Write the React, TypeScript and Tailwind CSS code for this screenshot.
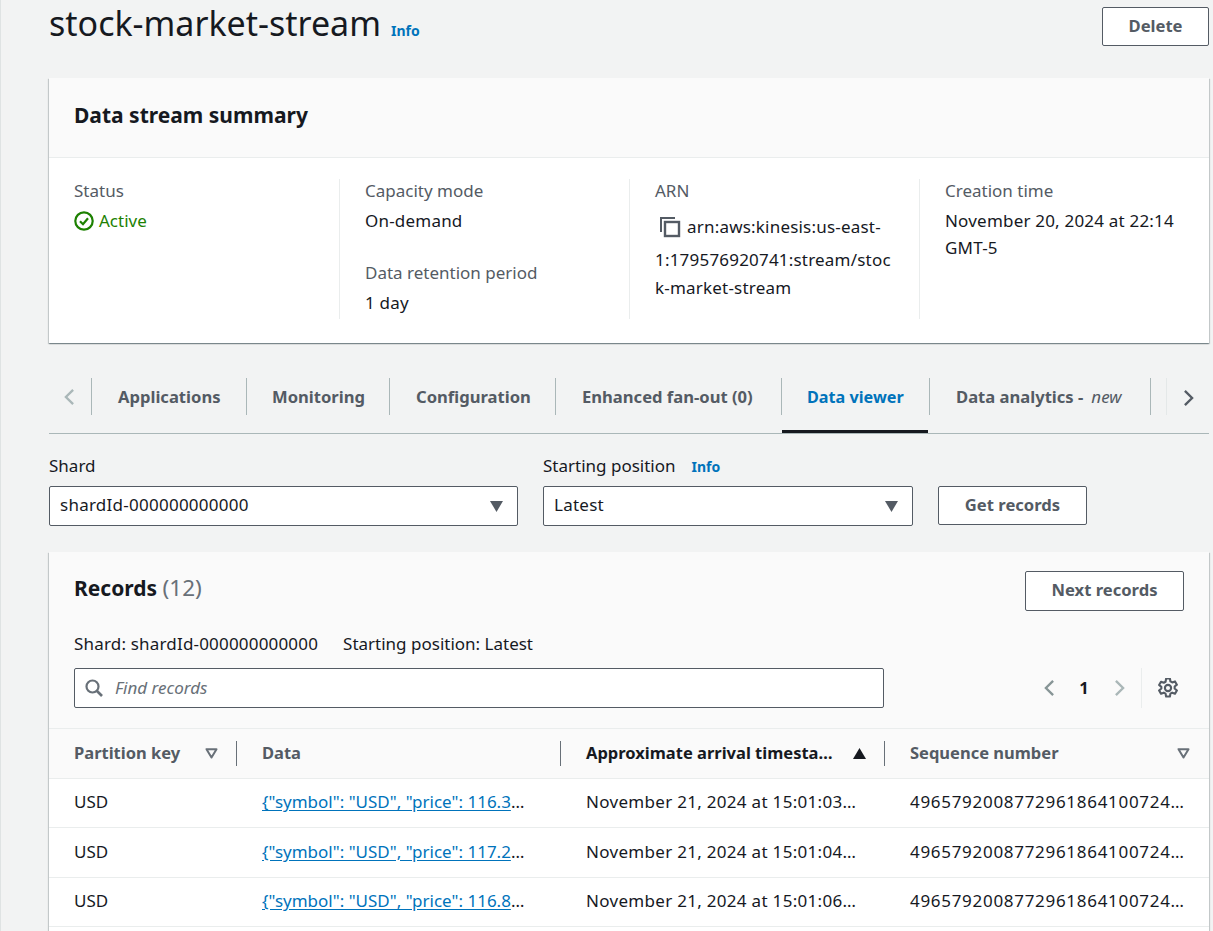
import React from 'react';

const records = [
  { data: '{"symbol": "USD", "price": 116.3', time: 'November 21, 2024 at 15:01:03' },
  { data: '{"symbol": "USD", "price": 117.2', time: 'November 21, 2024 at 15:01:04' },
  { data: '{"symbol": "USD", "price": 116.8', time: 'November 21, 2024 at 15:01:06' },
];

const Caret = ({ className, fill = '#545b64' }: { className: string; fill?: string }) => (
  <svg viewBox="0 0 12 10" className={className}>
    <path d="M0 0h12L6 10z" fill={fill} />
  </svg>
);

const SortOutline = () => (
  <svg viewBox="0 0 13 11" className="w-[13px] h-[11px]">
    <path d="M1.5 1.2h10L6.5 9.5z" fill="none" stroke="#687078" strokeWidth="2" strokeLinejoin="round" />
  </svg>
);

const Chevron = ({ dir, color, className }: { dir: 'l' | 'r'; color: string; className: string }) => (
  <svg viewBox="0 0 12 20" className={className}>
    <path d={dir === 'l' ? 'M10 2L2 10l8 8' : 'M2 2l8 8-8 8'} fill="none" stroke={color} strokeWidth="2.6" />
  </svg>
);

const TabDivider = () => <div className="w-px h-[37px] bg-[#aab7b8] shrink-0" />;

const Tab = ({ label, active, suffix, tight, className }: { label: string; active?: boolean; suffix?: string; tight?: boolean; className: string }) => (
  <div className={`relative h-[55px] flex items-start ${className}`}>
    <TabDivider />
    <div className={`${tight ? 'pl-[25px]' : 'pl-[26px]'} flex items-center h-[38px] whitespace-nowrap`}>
      <span className={`font-bold ${active ? 'text-[16.2px] text-[#0073bb]' : 'text-[16.6px] text-[#545b64]'}`}>{label}</span>
      {suffix && <span className="italic text-[#545b64] text-[17px] ml-[8px]">{suffix}</span>}
    </div>
    {active && <div className="absolute left-px right-px bottom-0 h-[3px] bg-[#16191f]" />}
  </div>
);

const Label = ({ children }: { children: React.ReactNode }) => (
  <div className="text-[#545b64] text-[17px] leading-[24px]">{children}</div>
);

const Value = ({ children }: { children: React.ReactNode }) => (
  <div className="text-[#16191f] text-[17px] leading-[27px] tracking-[0.2px]">{children}</div>
);

const Button = ({ children, className }: { children: React.ReactNode; className: string }) => (
  <button className={`border border-[#545b64] rounded-[2px] bg-white font-bold text-[16.6px] text-[#545b64] flex items-center justify-center ${className}`}>
    {children}
  </button>
);

const SelectBox = ({ value, className }: { value: string; className: string }) => (
  <div className={`h-10 border border-[#545b64] rounded-[2px] bg-white flex items-center justify-between pl-[10px] pr-[14px] ${className}`}>
    <span className="text-[17px] text-[#16191f] tracking-[0.25px] mt-[-2px]">{value}</span>
    <Caret className="w-[13px] h-[11px] mt-[1px]" />
  </div>
);

const cardShadow = 'shadow-[0_1px_1px_0_rgba(0,28,36,0.3),1px_1px_1px_0_rgba(0,28,36,0.15),-1px_1px_1px_0_rgba(0,28,36,0.15)]';

export default function App() {
  return (
    <div className="h-[931px] overflow-hidden bg-[#f2f3f3] border-l border-[#dfe3e3] pl-[48px] pr-[4px] pt-[7px] font-['Noto_Sans',sans-serif]">
      {/* Title */}
      <div className="flex justify-between items-start h-[71px]">
        <div className="flex items-baseline mt-[-6px]">
          <h1 className="text-[34px] leading-[44px] text-[#16191f]">stock-market-stream</h1>
          <a className="ml-[10px] text-[14px] font-bold text-[#0073bb]">Info</a>
        </div>
        <Button className="w-[107px] h-[39px] pb-[1px]">Delete</Button>
      </div>

      {/* Summary */}
      <section className={`bg-white h-[265px] ${cardShadow}`}>
        <div className="h-[80px] bg-[#fafafa] border-b border-[#eaeded] pl-[25px] pb-[3px] flex items-center">
          <h2 className="font-bold text-[21px] text-[#16191f]">Data stream summary</h2>
        </div>
        <div className="grid grid-cols-[290px_290px_290px_1fr] pl-[25px] pt-[21px]">
          <div className="h-[140px] w-[265px]">
            <Label>Status</Label>
            <div className="flex items-center gap-[5px] mt-[6px]">
              <svg viewBox="0 0 20 20" className="w-5 h-5">
                <circle cx="10" cy="10" r="8.7" fill="none" stroke="#1d8102" strokeWidth="2.2" />
                <path d="M6 10.2l3 3 5-6" fill="none" stroke="#1d8102" strokeWidth="2.2" />
              </svg>
              <span className="text-[17px] leading-[24px] text-[#1d8102]">Active</span>
            </div>
          </div>
          <div className="h-[140px] border-l border-[#eaeded] pl-[25px] ml-[-25px]">
            <Label>Capacity mode</Label>
            <div className="mt-[4px]"><Value>On-demand</Value></div>
            <div className="mt-[27px]"><Label>Data retention period</Label></div>
            <div className="mt-[4px]"><Value>1 day</Value></div>
          </div>
          <div className="h-[140px] border-l border-[#eaeded] pl-[25px] ml-[-25px]">
            <Label>ARN</Label>
            <div className="mt-[8px] text-[17px] leading-[31px] text-[#16191f] tracking-[0.2px] whitespace-nowrap">
              <div className="flex items-center h-[31px]">
                <svg viewBox="0 0 22 22" className="w-[22px] h-[22px] ml-[4px] mr-[6px] shrink-0">
                  <path d="M2 16V2h14" fill="none" stroke="#545b64" strokeWidth="2" />
                  <rect x="6" y="6" width="14" height="14" fill="none" stroke="#545b64" strokeWidth="2.4" />
                </svg>
                arn:aws:kinesis:us-east-
              </div>
              <div className="mt-[2px]">1:179576920741:stream/stoc</div>
              <div className="mt-[-3px]">k-market-stream</div>
            </div>
          </div>
          <div className="h-[140px] border-l border-[#eaeded] pl-[25px] ml-[-25px]">
            <Label>Creation time</Label>
            <div className="mt-[4px]">
              <Value>November 20, 2024 at 22:14</Value>
              <Value>GMT-5</Value>
            </div>
          </div>
        </div>
      </section>

      {/* Tabs */}
      <div className="mt-[35px] h-[56px] border-b border-[#aab7b8] flex items-start">
        <div className="w-[42px] h-[37px] flex items-center justify-end pr-[16px]">
          <Chevron dir="l" color="#aab7b8" className="w-[11px] h-[18px]" />
        </div>
        <Tab label="Applications" className="w-[155px]" />
        <Tab label="Monitoring" tight className="w-[143px]" />
        <Tab label="Configuration" className="w-[166px]" />
        <Tab label="Enhanced fan-out (0)" className="w-[226px]" />
        <Tab label="Data viewer" active tight className="w-[148px]" />
        <Tab label="Data analytics -" suffix="new" className="w-[221px]" />
        <TabDivider />
        <div className="w-px h-[37px] bg-[#e4e8e8] ml-[15px]" />
        <div className="h-[37px] flex items-center ml-[16px] pt-[2px]">
          <Chevron dir="r" color="#545b64" className="w-[11px] h-[18px]" />
        </div>
      </div>

      {/* Shard controls */}
      <div className="flex mt-[20px] items-start">
        <div className="w-[469px]">
          <div className="text-[17px] leading-[24px] mb-[8px] text-[#16191f]">Shard</div>
          <SelectBox value="shardId-000000000000" className="w-full" />
        </div>
        <div className="w-[370px] ml-[25px]">
          <div className="flex items-baseline h-[24px] text-[17px] leading-[24px] mb-[8px] text-[#16191f]">
            Starting position
            <a className="ml-[16px] text-[14px] font-bold text-[#0073bb]">Info</a>
          </div>
          <SelectBox value="Latest" className="w-full" />
        </div>
        <Button className="w-[149px] h-[39px] ml-[25px] mt-[32px] pb-[1px]">Get records</Button>
      </div>

      {/* Records */}
      <section className={`mt-[26px] bg-white h-[500px] ${cardShadow}`}>
        <div className="bg-[#fafafa] border-b border-[#eaeded]">
          <div className="h-[177px] border-b border-[#eaeded] pl-[25px] pr-[25px] pt-[19px]">
            <div className="flex justify-between items-start">
              <h2 className="text-[21px] leading-[38px] text-[#16191f] mt-[-2px]">
                <span className="font-bold">Records</span> <span className="text-[#687078] text-[22.5px]">(12)</span>
              </h2>
              <Button className="w-[159px] h-10 pb-[1px]">Next records</Button>
            </div>
            <div className="flex gap-[25px] mt-[21px] text-[17px] leading-[24px] text-[#16191f]">
              <span className="tracking-[0.18px]">Shard: shardId-000000000000</span>
              <span>Starting position: Latest</span>
            </div>
            <div className="flex items-center mt-[12px]">
              <div className="w-[810px] h-10 border border-[#545b64] rounded-[2px] bg-white flex items-center pl-[10px]">
                <svg viewBox="0 0 18 18" className="w-[18px] h-[18px]">
                  <circle cx="7.5" cy="7.5" r="6" fill="none" stroke="#687078" strokeWidth="2.2" />
                  <path d="M12 12l5 5" stroke="#687078" strokeWidth="2.6" />
                </svg>
                <span className="ml-[12px] italic text-[17px] text-[#687078]">Find records</span>
              </div>
              <div className="ml-auto flex items-center h-10">
                <Chevron dir="l" color="#879596" className="w-[11px] h-[18px]" />
                <span className="ml-[24px] w-[10px] text-center font-bold text-[16.5px] text-[#16191f]">1</span>
                <Chevron dir="r" color="#aab7b8" className="w-[11px] h-[18px] ml-[25px]" />
                <div className="w-px h-10 bg-[#eaeded] ml-[16px]" />
                <svg viewBox="1 1 18 18" className="w-5 h-5 ml-[16px] mr-[6px]">
                  <path d="M8.3 1.5h3.4l.5 2.6 1.6.9 2.5-.9 1.7 2.9-2 1.7v1.8l2 1.7-1.7 2.9-2.5-.9-1.6.9-.5 2.6H8.3l-.5-2.6-1.6-.9-2.5.9-1.7-2.9 2-1.7V9l-2-1.7 1.7-2.9 2.5.9 1.6-.9z" fill="none" stroke="#545b64" strokeWidth="1.9" strokeLinejoin="round" />
                  <circle cx="10" cy="10" r="2.8" fill="none" stroke="#545b64" strokeWidth="1.9" />
                </svg>
              </div>
            </div>
          </div>
          <div className="grid grid-cols-[163px_324px_324px_1fr] h-[49px] items-center text-[16.5px] font-bold pl-[25px]">
            <div className="flex items-center justify-between pr-[19px] text-[#545b64] relative">
              Partition key
              <SortOutline />
              <div className="absolute right-0 top-0 w-px h-[25px] bg-[#687078]" />
            </div>
            <div className="pl-[25px] text-[#545b64] relative">
              Data
              <div className="absolute right-0 top-0 w-px h-[25px] bg-[#687078]" />
            </div>
            <div className="pl-[25px] flex items-center justify-between pr-[19px] text-[#16191f] relative">
              <span className="whitespace-nowrap">Approximate arrival timesta…</span>
              <Caret className="w-[13px] h-[11px] rotate-180" fill="#16191f" />
              <div className="absolute right-0 top-0 w-px h-[25px] bg-[#687078]" />
            </div>
            <div className="pl-[25px] flex items-center justify-between pr-[19px] text-[#545b64]">
              Sequence number
              <SortOutline />
            </div>
          </div>
        </div>
        {records.map(r => (
          <div key={r.time} className="grid grid-cols-[163px_324px_324px_1fr] h-[49.3px] pb-[2px] items-center border-b border-[#eaeded] text-[17px] text-[#16191f] pl-[25px] whitespace-nowrap">
            <div>USD</div>
            <div className="pl-[25px]">
              <a className="text-[#0073bb] underline underline-offset-2">{r.data}</a>…
            </div>
            <div className="pl-[25px] tracking-[0.3px]">{r.time}…</div>
            <div className="pl-[25px] tracking-[0.7px]">4965792008772961864100724…</div>
          </div>
        ))}
      </section>
    </div>
  );
}
